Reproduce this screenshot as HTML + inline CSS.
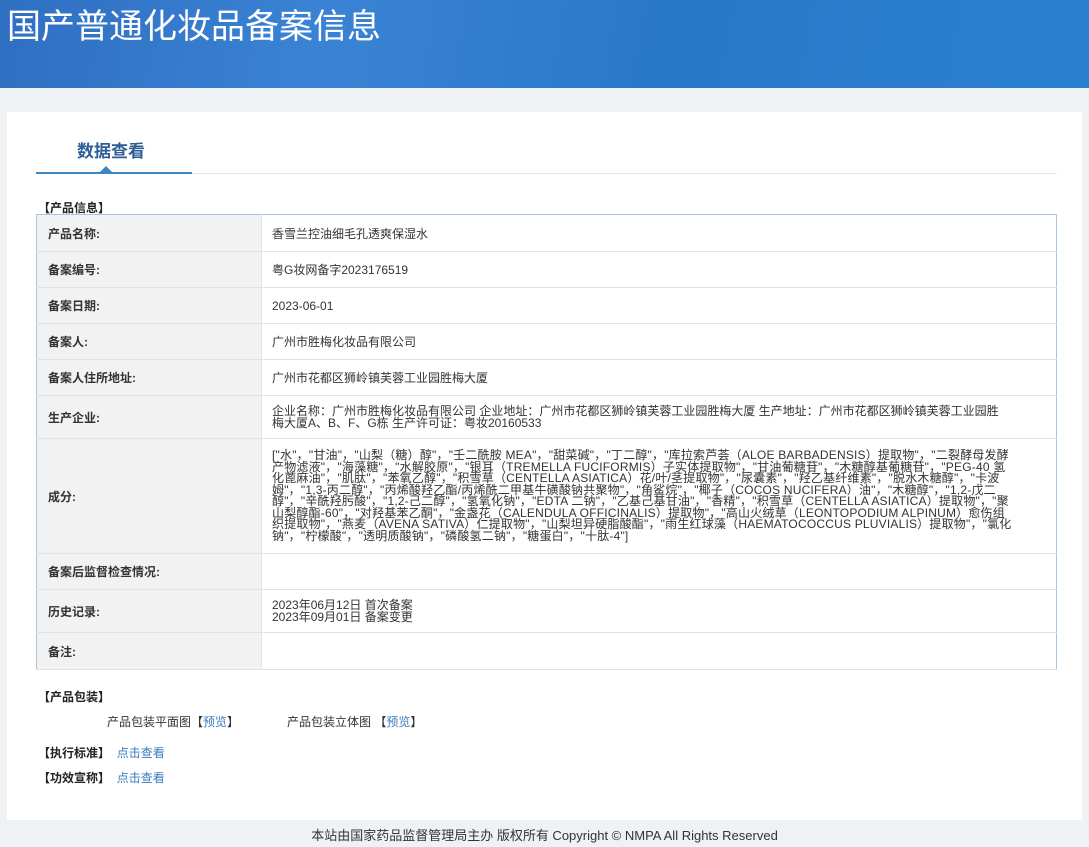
<!DOCTYPE html>
<html><head><meta charset="utf-8">
<style>
*{margin:0;padding:0;box-sizing:border-box}
body{width:1089px;height:847px;background:#eef2f5;font-family:"Liberation Sans","Noto Sans CJK SC",sans-serif;color:#333;font-size:12px;position:relative;overflow:hidden}
.hdr{position:absolute;left:0;top:0;width:1089px;height:88px;background:linear-gradient(100deg,#2f6fc2 0%,#3a83d4 30%,#2a78c8 60%,#2a80cf 100%)}
.hdr h1{position:absolute;left:7px;top:-1px;font-size:34px;font-weight:normal;color:#fff;font-family:"Liberation Sans","Noto Sans CJK SC",sans-serif}
.panel{position:absolute;left:7px;top:112px;width:1075px;height:708px;background:#fff}
.tab{position:absolute;left:77px;top:137px;font-size:17px;font-weight:bold;color:#2c5d96}
.line{position:absolute;left:36px;top:173px;width:1021px;height:1px;background:#e3e6ea}
.line2{position:absolute;left:36px;top:172px;width:156px;height:2px;background:#3b86c4}
.tri{position:absolute;left:100px;top:166px;width:0;height:0;border-left:6px solid transparent;border-right:6px solid transparent;border-bottom:6px solid #3b86c4}
.sec{position:absolute;font-weight:bold;color:#222;font-size:12px}
table{position:absolute;left:36px;top:214px;width:1021px;border-collapse:collapse;border:1px solid #a9c5e2}
td{border-bottom:1px solid #e3e3e3;padding:0 10px;vertical-align:middle;font-size:12px}
td.l{width:225px;background:#f2f2f2;font-weight:bold;color:#333;padding-left:11px;border-right:1px solid #e3e3e3}
td.v{color:#333}
.ing{line-height:11.5px;white-space:nowrap;font-size:12px;letter-spacing:0.2px}
a{color:#3a7bbf;text-decoration:none}
.foot{position:absolute;left:0;width:1089px;top:825px;text-align:center;font-size:13px;color:#333}
</style></head><body>
<div class="hdr"><h1>国产普通化妆品备案信息</h1></div>
<div class="panel"></div>
<div class="tab">数据查看</div>
<div class="line"></div><div class="line2"></div><div class="tri"></div>
<div class="sec" style="left:38px;top:199px">【产品信息】</div>
<table>
<tr style="height:37px"><td class="l">产品名称:</td><td class="v">香雪兰控油细毛孔透爽保湿水</td></tr>
<tr style="height:36px"><td class="l">备案编号:</td><td class="v">粤G妆网备字2023176519</td></tr>
<tr style="height:36px"><td class="l">备案日期:</td><td class="v">2023-06-01</td></tr>
<tr style="height:36px"><td class="l">备案人:</td><td class="v">广州市胜梅化妆品有限公司</td></tr>
<tr style="height:36px"><td class="l">备案人住所地址:</td><td class="v">广州市花都区狮岭镇芙蓉工业园胜梅大厦</td></tr>
<tr style="height:43px"><td class="l">生产企业:</td><td class="v" style="line-height:12px">企业名称：广州市胜梅化妆品有限公司 企业地址：广州市花都区狮岭镇芙蓉工业园胜梅大厦 生产地址：广州市花都区狮岭镇芙蓉工业园胜<br>梅大厦A、B、F、G栋 生产许可证：粤妆20160533</td></tr>
<tr style="height:115px"><td class="l">成分:</td><td class="v"><div class="ing">["水"，"甘油"，"山梨（糖）醇"，"壬二酰胺 MEA"，"甜菜碱"，"丁二醇"，"库拉索芦荟（ALOE BARBADENSIS）提取物"，"二裂酵母发酵<br>产物滤液"，"海藻糖"，"水解胶原"，"银耳（TREMELLA FUCIFORMIS）子实体提取物"，"甘油葡糖苷"，"木糖醇基葡糖苷"，"PEG-40 氢<br>化蓖麻油"，"肌肽"，"苯氧乙醇"，"积雪草（CENTELLA ASIATICA）花/叶/茎提取物"，"尿囊素"，"羟乙基纤维素"，"脱水木糖醇"，"卡波<br>姆"，"1,3-丙二醇"，"丙烯酸羟乙酯/丙烯酰二甲基牛磺酸钠共聚物"，"角鲨烷"，"椰子（COCOS NUCIFERA）油"，"木糖醇"，"1,2-戊二<br>醇"，"辛酰羟肟酸"，"1,2-己二醇"，"氢氧化钠"，"EDTA 二钠"，"乙基己基甘油"，"香精"，"积雪草（CENTELLA ASIATICA）提取物"，"聚<br>山梨醇酯-60"，"对羟基苯乙酮"，"金盏花（CALENDULA OFFICINALIS）提取物"，"高山火绒草（LEONTOPODIUM ALPINUM）愈伤组<br>织提取物"，"燕麦（AVENA SATIVA）仁提取物"，"山梨坦异硬脂酸酯"，"雨生红球藻（HAEMATOCOCCUS PLUVIALIS）提取物"，"氯化<br>钠"，"柠檬酸"，"透明质酸钠"，"磷酸氢二钠"，"糖蛋白"，"十肽-4"]</div></td></tr>
<tr style="height:36px"><td class="l">备案后监督检查情况:</td><td class="v"></td></tr>
<tr style="height:43px"><td class="l">历史记录:</td><td class="v" style="line-height:12px">2023年06月12日 首次备案<br>2023年09月01日 备案变更</td></tr>
<tr style="height:37px"><td class="l">备注:</td><td class="v"></td></tr>
</table>
<div class="sec" style="left:38px;top:688px">【产品包装】</div>
<div style="position:absolute;left:107px;top:713px">产品包装平面图【<a>预览</a>】</div>
<div style="position:absolute;left:287px;top:713px">产品包装立体图 【<a>预览</a>】</div>
<div style="position:absolute;left:38px;top:744px"><b style="color:#222">【执行标准】</b>&nbsp; <a>点击查看</a></div>
<div style="position:absolute;left:38px;top:769px"><b style="color:#222">【功效宣称】</b>&nbsp; <a>点击查看</a></div>
<div class="foot">本站由国家药品监督管理局主办 版权所有 Copyright © NMPA All Rights Reserved</div>
</body></html>
